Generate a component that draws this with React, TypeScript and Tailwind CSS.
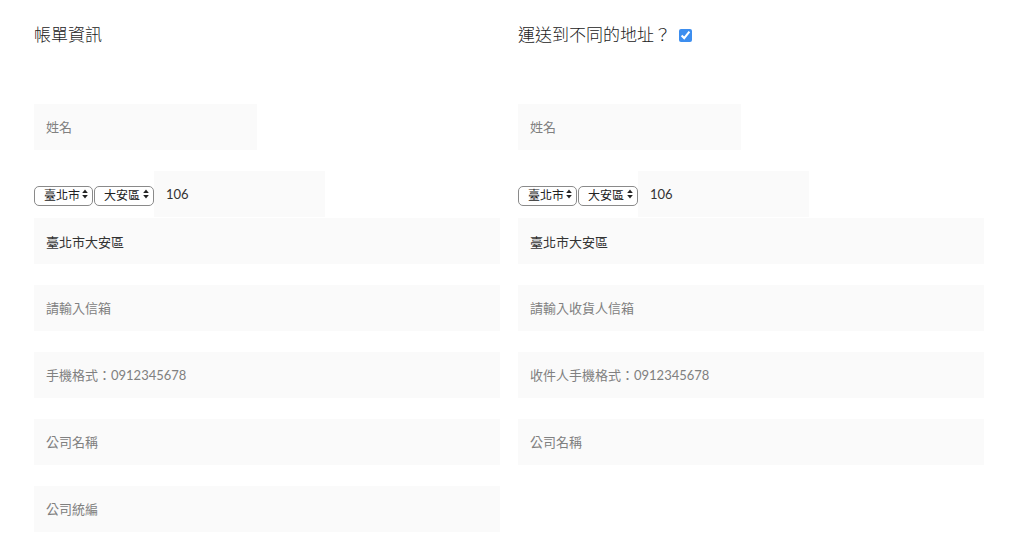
import React from 'react';

const font = { fontFamily: '"Lato", "Noto Sans CJK TC", sans-serif' };

const Field: React.FC<{ placeholder?: string; value?: string; className?: string }> = ({ placeholder, value, className = '' }) => (
  <input
    readOnly
    defaultValue={value}
    placeholder={placeholder}
    className={`h-[46px] bg-[#fafafa] px-3 text-[13px] text-[#333] placeholder:text-[#808080] outline-none ${className}`}
  />
);

const Arrows = () => (
  <svg width="6" height="10" viewBox="0 0 6 10" className="absolute right-[5px] top-1/2 -translate-y-1/2 pointer-events-none">
    <path d="M3 0.5 L5.8 4 H0.2 Z" fill="#222" />
    <path d="M3 9.5 L5.8 6 H0.2 Z" fill="#222" />
  </svg>
);

const Select: React.FC<{ label: string; width: string }> = ({ label, width }) => (
  <span className={`relative inline-block ${width}`}>
    <select className="appearance-none w-full h-[20px] border border-[#8a8a8a] rounded-[5px] pl-[9px] text-xs text-[#222] bg-white">
      <option>{label}</option>
    </select>
    <Arrows />
  </span>
);

const AddressRow: React.FC = () => (
  <div>
    <div className="flex items-end">
      <div className="flex items-center h-[46px] gap-px">
        <Select label="臺北市" width="w-[59px]" />
        <Select label="大安區" width="w-[60px]" />
      </div>
      <Field value="106" className="w-[171px]" />
    </div>
    <Field value="臺北市大安區" className="w-full block mt-px" />
  </div>
);

const App: React.FC = () => {
  return (
    <div className="bg-white min-h-[558px] pl-[34px] pr-[31px] pt-[24px] text-[#333]" style={font}>
      <div className="grid grid-cols-2 gap-[18px]">
        <div>
          <h3 className="text-[17px] h-[22px] leading-[22px] font-light text-[#222]">帳單資訊</h3>
          <div className="mt-[58px] flex flex-col gap-[21px]">
            <Field placeholder="姓名" className="w-[223px]" />
            <AddressRow />
            <Field placeholder="請輸入信箱" className="w-full" />
            <Field placeholder="手機格式：0912345678" className="w-full" />
            <Field placeholder="公司名稱" className="w-full" />
            <Field placeholder="公司統編" className="w-full" />
          </div>
        </div>
        <div>
          <h3 className="text-[17px] h-[22px] leading-[22px] font-light text-[#222] flex items-center">
            運送到不同的地址？
            <input type="checkbox" defaultChecked className="ml-[8px] w-[13px] h-[13px] accent-[#3d8eef]" />
          </h3>
          <div className="mt-[58px] flex flex-col gap-[21px]">
            <Field placeholder="姓名" className="w-[223px]" />
            <AddressRow />
            <Field placeholder="請輸入收貨人信箱" className="w-full" />
            <Field placeholder="收件人手機格式：0912345678" className="w-full" />
            <Field placeholder="公司名稱" className="w-full" />
          </div>
        </div>
      </div>
    </div>
  );
};

export default App;
